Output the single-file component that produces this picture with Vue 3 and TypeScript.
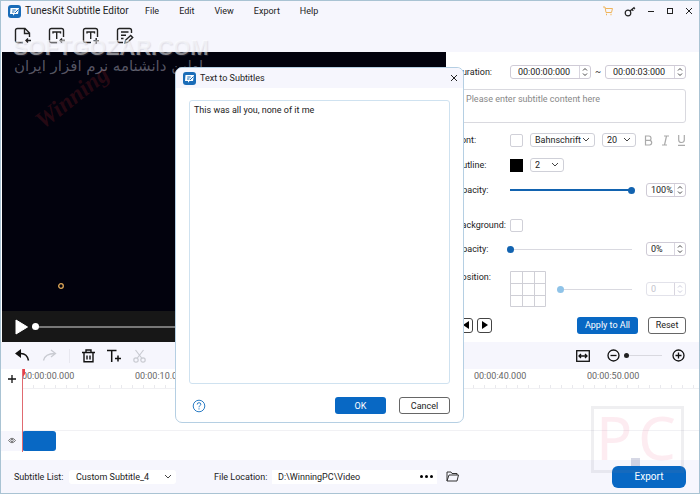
<script setup lang="ts">
import { ref } from 'vue'

const menus = ['File', 'Edit', 'View', 'Export', 'Help']
const marks = ['00:00:00.000', '00:00:10.000', '00:00:20.000', '00:00:30.000', '00:00:40.000', '00:00:50.000']
const startTime = ref('00:00:00:000')
const endTime = ref('00:00:03:000')
const dialogText = ref('This was all you, none of it me')
const textOpacity = ref(100)
const backOpacity = ref(0)
const position = ref(0)
const zoomLevel = ref(0)
const path = ref('D:\\WinningPC\\Video')
</script>

<template>
  <div class="app">
    <header class="titlebar">
      <svg class="logo" viewBox="0 0 13 13"><rect width="13" height="13" rx="3" fill="#1a6cb8" /><path d="M2.500 3h8.500l-1 6H6.500L5 10.800V9H2z" fill="#fff" /><path d="M4.300 5h3.500M4 7h2.500M7 8l3.500-3.500" stroke="#1a6cb8" fill="none" /></svg>
      <h1>TunesKit Subtitle Editor</h1>
      <nav>
        <button v-for="m in menus" :key="m" class="plain">{{ m }}</button>
      </nav>
      <div class="window-tools">
        <button class="plain" aria-label="Store"><svg width="10" height="10" viewBox="0 0 10 10" fill="none" stroke="#efb55c"><path d="M0 1h2l1 5.500h5.500L9.500 2.500H2.400" /><path d="M3 8.500h1M7.500 8.500h1" stroke-width="1.500" /></svg></button>
        <button class="plain" aria-label="Register"><svg width="12" height="11" viewBox="0 0 12 11" fill="none" stroke="#222" stroke-width="1.200"><circle cx="4" cy="7" r="2.800" /><path d="M6 5l4.500-3.700M8 3.300l1.300 1.500M9.700 1.900l1.300 1.300" /></svg></button>
        <button class="plain" aria-label="Minimize"><svg width="8" height="8" viewBox="0 0 8 8" stroke="#222"><path d="M1 4.500h6" /></svg></button>
        <button class="plain" aria-label="Maximize"><svg width="8" height="8" viewBox="0 0 8 8" fill="none" stroke="#222"><rect x="1.500" y="1.500" width="5" height="5" /></svg></button>
        <button class="plain" aria-label="Close"><svg width="8" height="8" viewBox="0 0 8 8" stroke="#222"><path d="M1 1l6 6M7 1L1 7" /></svg></button>
      </div>
    </header>

    <div class="toolbar">
      <button class="plain" aria-label="New file"><svg width="18" height="18" viewBox="0 0 18 18"><path d="M9 15.500H3.500Q1.500 15.500 1.500 13.500V3.500Q1.500 1.500 3.500 1.500H11L15.500 6v4M10.500 1.500V6.500h5M17 13.500h-5m2-2l-2 2 2 2" /></svg></button>
      <button class="plain" aria-label="Import subtitles"><svg width="18" height="18" viewBox="0 0 18 18"><path d="M9 15.500H3.500Q1.500 15.500 1.500 13.500V3.500Q1.500 1.500 3.500 1.500h10q2 0 2 2V10M5 6.500V5h7.500v1.500M8.700 5v7M17 13.500h-5m2-2l-2 2 2 2" /></svg></button>
      <button class="plain" aria-label="Add text"><svg width="18" height="18" viewBox="0 0 18 18"><path d="M9 15.500H3.500Q1.500 15.500 1.500 13.500V3.500Q1.500 1.500 3.500 1.500h10q2 0 2 2V10M5 6.500V5h7.500v1.500M8.700 5v7M11.500 13.800h5.500M14.200 11v5.500" /></svg></button>
      <button class="plain" aria-label="Text to subtitles"><svg width="18" height="18" viewBox="0 0 18 18"><path d="M7 15.500H3.500Q1.500 15.500 1.500 13.500V3.500Q1.500 1.500 3.500 1.500h10q2 0 2 2V6M5 5h7.500M5 8.300h5M5 11.500h2.500M9 16l.7-3 5-4.500 2 2-5 4.700z" /></svg></button>
    </div>

    <main>
      <section class="player">
        <div class="video">
          <svg class="spot" width="8" height="8" viewBox="0 0 8 8"><circle cx="4" cy="4" r="2.300" fill="none" stroke="#e0a958" stroke-width="1.300" /></svg>
        </div>
        <div class="transport">
          <button class="plain" aria-label="Play"><svg width="13" height="16" viewBox="0 0 13 16"><path d="M1 1l11.500 7L1 15z" fill="#fff" stroke="#fff" stroke-linejoin="round" /></svg></button>
          <input class="seek" type="range" value="0" aria-label="Seek" />
        </div>
      </section>

      <section class="panel">
        <div class="row">
          <label for="start">Duration:</label>
          <span class="spin time"><input id="start" v-model="startTime" /><svg viewBox="0 0 8 12"><path d="M2 4.500l2-2 2 2M2 7.500l2 2 2-2" /></svg></span>
          <span class="tilde">~</span>
          <span class="spin time"><input v-model="endTime" aria-label="End time" /><svg viewBox="0 0 8 12"><path d="M2 4.500l2-2 2 2M2 7.500l2 2 2-2" /></svg></span>
        </div>
        <textarea class="content" placeholder="Please enter subtitle content here" aria-label="Subtitle content"></textarea>
        <div class="row">
          <label for="font">Font:</label>
          <button class="swatch" aria-label="Font color"></button>
          <span class="pick font"><select id="font"><option>Bahnschrift</option></select><svg viewBox="0 0 8 6"><path d="M1 1l3 3 3-3" /></svg></span>
          <span class="pick size"><select aria-label="Font size"><option>20</option></select><svg viewBox="0 0 8 6"><path d="M1 1l3 3 3-3" /></svg></span>
          <span class="styles">
            <button class="plain" aria-label="Bold"><svg width="9" height="11" viewBox="0 0 9 11"><path d="M1.500 1H5q2 0 2 2.200T5 5.300H1.500zM1.500 5.300h4q2.200 0 2.200 2.300T5.500 10h-4z" /></svg></button>
            <button class="plain" aria-label="Italic"><svg width="9" height="11" viewBox="0 0 9 11"><path d="M3 1h5M1 10h5M5.500 1l-2 9" /></svg></button>
            <button class="plain" aria-label="Underline"><svg width="9" height="11" viewBox="0 0 9 11"><path d="M1.700 0v5q0 2.500 2.800 2.500T7.300 5V0M1 10.300h7" /></svg></button>
          </span>
        </div>
        <div class="row">
          <label for="outline">Outline:</label>
          <button class="swatch black" aria-label="Outline color"></button>
          <span class="pick size"><select id="outline"><option>2</option></select><svg viewBox="0 0 8 6"><path d="M1 1l3 3 3-3" /></svg></span>
        </div>
        <div class="row">
          <label for="op1">Opacity:</label>
          <input id="op1" v-model="textOpacity" class="slider full" type="range" />
          <span class="spin pct"><input :value="textOpacity + '%'" aria-label="Opacity value" /><svg viewBox="0 0 8 12"><path d="M2 4.500l2-2 2 2M2 7.500l2 2 2-2" /></svg></span>
        </div>
        <div class="row group">
          <label for="bg">Background:</label>
          <button id="bg" class="swatch"></button>
        </div>
        <div class="row">
          <label for="op2">Opacity:</label>
          <input id="op2" v-model="backOpacity" class="slider" type="range" />
          <span class="spin pct"><input :value="backOpacity + '%'" aria-label="Background opacity value" /><svg viewBox="0 0 8 12"><path d="M2 4.500l2-2 2 2M2 7.500l2 2 2-2" /></svg></span>
        </div>
        <div class="row position">
          <label for="pos">Position:</label>
          <svg class="grid9" width="36" height="36" viewBox="0 0 36 36"><path d="M.5.5h35v35H.5zM12.500.5v35M24.500.5v35M.5 12.500h35M.5 24.500h35" /></svg>
          <input id="pos" v-model="position" class="slider" type="range" disabled />
          <span class="spin pct off"><input :value="position" aria-label="Position value" disabled /><svg viewBox="0 0 8 12"><path d="M2 4.500l2-2 2 2M2 7.500l2 2 2-2" /></svg></span>
        </div>
        <div class="row actions">
          <button class="step" aria-label="Previous"><svg width="8" height="10" viewBox="0 0 8 10"><path d="M7 1v8L1 5z" /></svg></button>
          <button class="step" aria-label="Next"><svg width="8" height="10" viewBox="0 0 8 10"><path d="M1 1v8l6-4z" /></svg></button>
          <button class="btn primary apply">Apply to All</button>
          <button class="btn reset">Reset</button>
        </div>
      </section>
    </main>

    <div class="editbar">
      <button class="plain" aria-label="Undo"><svg width="15" height="13" viewBox="0 0 15 13"><path d="M6 0v9L0 4.500z" fill="#111" /><path d="M5 4.500q7-.5 8.500 7" stroke="#111" stroke-width="1.500" fill="none" /></svg></button>
      <button class="plain" aria-label="Redo"><svg width="15" height="13" viewBox="0 0 15 13" fill="none" stroke="#c9cbd2" stroke-width="1.300"><path d="M9 1l4.500 3.500L9 8M13 4.500Q3 4.500 1.500 11.500" /></svg></button>
      <i class="sep"></i>
      <button class="plain" aria-label="Delete"><svg width="13" height="14" viewBox="0 0 13 14" fill="none" stroke="#111" stroke-width="1.400"><path d="M0 3.500h13M4 3V1h5v2M2 4v8.800h9V4M5 6.500v4M8 6.500v4" /></svg></button>
      <button class="plain" aria-label="Add subtitle"><svg width="14" height="14" viewBox="0 0 14 14" fill="none" stroke="#111" stroke-width="1.500"><path d="M0 1.500h9.500M4.700 1.500V13M8 9.500h6M11 6.500v6" /></svg></button>
      <button class="plain" aria-label="Cut"><svg width="13" height="14" viewBox="0 0 13 14" fill="none" stroke="#c9cbd2" stroke-width="1.200"><path d="M2.500 1l6.500 8.500M10.500 1L4 9.500" /><circle cx="3" cy="11" r="2.200" /><circle cx="10" cy="11" r="2.200" /></svg></button>
      <div class="zoom">
        <button class="plain" aria-label="Fit"><svg width="14" height="12" viewBox="0 0 14 12" fill="none" stroke="#111" stroke-width="1.300"><rect x=".7" y=".7" width="12.600" height="10.600" /><path d="M3 6h8M5 4L3 6l2 2M9 4l2 2-2 2" /></svg></button>
        <button class="plain minus" aria-label="Zoom out"><svg width="13" height="13" viewBox="0 0 13 13" fill="none" stroke="#111" stroke-width="1.300"><circle cx="6.500" cy="6.500" r="5.500" /><path d="M3.500 6.500h6" /></svg></button>
        <input v-model="zoomLevel" class="slider dark" type="range" aria-label="Timeline zoom" />
        <button class="plain" aria-label="Zoom in"><svg width="13" height="13" viewBox="0 0 13 13" fill="none" stroke="#111" stroke-width="1.300"><circle cx="6.500" cy="6.500" r="5.500" /><path d="M3.500 6.500h6M6.500 3.500v6" /></svg></button>
      </div>
    </div>

    <section class="timeline">
      <div class="heads">
        <button class="plain add" aria-label="Add track"><svg width="8" height="8" viewBox="0 0 8 8"><path d="M0 4h8M4 0v8" stroke="#111" stroke-width="1.300" /></svg></button>
        <button class="plain eye" aria-label="Toggle visibility"><svg width="8" height="7" viewBox="0 0 8 7" fill="none" stroke="#555" stroke-width=".8"><path d="M.5 3.500q3.500-4.500 7 0q-3.500 4.500-7 0z" /><circle cx="4" cy="3.500" r="1.200" /></svg></button>
      </div>
      <div class="lanes">
        <div class="ruler"><span v-for="m in marks" :key="m">{{ m }}</span></div>
        <div class="lane"><div class="clip"></div></div>
        <svg class="playhead" width="4" height="83" viewBox="0 0 4 83"><path d="M0 0h3v5L1 8H0z" fill="#e8404a" /><path d="M.5 0v83" stroke="#e06a70" /></svg>
      </div>
    </section>

    <footer>
      <label for="list">Subtitle List:</label>
      <span class="pick flat"><select id="list"><option>Custom Subtitle_4</option></select><svg viewBox="0 0 8 6"><path d="M1 1l3 3 3-3" /></svg></span>
      <label class="loc" for="path">File Location:</label>
      <span class="path"><input id="path" v-model="path" /><button class="plain" aria-label="Browse"><svg width="13" height="3" viewBox="0 0 13 3"><circle cx="1.500" cy="1.500" r="1.500" /><circle cx="6.500" cy="1.500" r="1.500" /><circle cx="11.500" cy="1.500" r="1.500" /></svg></button></span>
      <button class="plain" aria-label="Open folder"><svg width="13" height="11" viewBox="0 0 13 11" fill="none" stroke="#333"><path d="M1 10V1h4l1 1.500h5V4M1 10l2-6h9.500l-1.500 6z" /></svg></button>
      <button class="btn primary export">Export</button>
    </footer>

    <div class="mark-script">Winning</div>
    <div class="mark-site">SOFTGOZAR.COM</div>
    <div class="mark-fa" dir="rtl" lang="fa">اولین دانشنامه نرم افزار ایران</div>
    <div class="mark-pc"><span>P</span><i></i><span>C</span></div>

    <section class="dialog" role="dialog" aria-labelledby="dlg-title">
      <header>
        <svg class="logo" viewBox="0 0 13 13"><rect width="13" height="13" rx="3" fill="#1a6cb8" /><path d="M2.500 3h8.500l-1 6H6.500L5 10.800V9H2z" fill="#fff" /><path d="M4.300 5h3.500M4 7h2.500M7 8l3.500-3.500" stroke="#1a6cb8" fill="none" /></svg>
        <h2 id="dlg-title">Text to Subtitles</h2>
        <button class="plain" aria-label="Close dialog"><svg width="8" height="8" viewBox="0 0 8 8" stroke="#222"><path d="M1 1l6 6M7 1L1 7" /></svg></button>
      </header>
      <textarea v-model="dialogText" aria-label="Text"></textarea>
      <div class="dialog-actions">
        <button class="plain help" aria-label="Help"><svg width="14" height="14" viewBox="0 0 14 14" fill="none" stroke="#2b7cc4"><circle cx="7" cy="7" r="5.800" /><path d="M5.200 5.500q0-1.800 1.800-1.800t1.800 1.600q0 1-1 1.500T7 8.300M7 9.300v1.200" /></svg></button>
        <button class="btn primary">OK</button>
        <button class="btn">Cancel</button>
      </div>
    </section>
  </div>
</template>

<style>
body {
  margin: 0;
}
</style>

<style scoped>
* {
  box-sizing: border-box;
}
.app {
  position: relative;
  display: flex;
  flex-direction: column;
  min-height: 100vh;
  overflow: hidden;
  border: 1px solid #a9c3d3;
  background: #fff;
  color: #222;
  font: 9px/12px Roboto, "Noto Sans", sans-serif;
}
button, input, select, textarea {
  margin: 0;
  padding: 0;
  color: inherit;
  font: inherit;
}
input, textarea, select {
  min-width: 0;
  outline: 0;
}
svg {
  display: block;
  flex: none;
}
.plain {
  display: flex;
  border: 0;
  background: none;
}
.logo {
  width: 13px;
  height: 13px;
}
.titlebar {
  display: flex;
  align-items: center;
  height: 20px;
  padding: 0 6px 0 7px;
  background: #f6f6fd;
}
h1, h2 {
  margin: 0;
  font-weight: 400;
  white-space: nowrap;
}
h1 {
  width: 115px;
  margin-left: 4px;
  font-size: 10px;
}
nav {
  display: flex;
  gap: 10px;
}
nav .plain {
  padding: 0 5px;
}
.window-tools {
  display: flex;
  flex: 1;
  align-items: center;
  justify-content: flex-end;
  gap: 11px;
}
.toolbar {
  display: flex;
  gap: 16px;
  height: 31px;
  padding: 6px 13px;
  background: #f6f6fd;
}
.toolbar svg {
  fill: none;
  stroke: #222;
  stroke-width: 1.400;
}
main {
  display: flex;
  flex: 1;
}
.player {
  display: flex;
  flex: 1;
  flex-direction: column;
  margin-left: 1px;
}
.video {
  flex: 1;
  padding: 230px 0 0 55px;
  background: #02020d;
}
.transport {
  display: flex;
  align-items: center;
  gap: 4px;
  height: 31px;
  padding-left: 13px;
  background: #171717;
}
.seek {
  flex: 1;
  height: 8px;
  appearance: none;
  background: linear-gradient(#777, #777) center / 100% 2px no-repeat;
}
.seek::-webkit-slider-thumb {
  width: 7px;
  height: 7px;
  appearance: none;
  border-radius: 50%;
  background: #fff;
}
.panel {
  width: 253px;
  padding: 10px 13px 6px 10px;
}
.row {
  display: flex;
  align-items: center;
  height: 20px;
  margin-bottom: 5px;
}
.row label {
  width: 54px;
  white-space: nowrap;
}
.spin {
  display: flex;
  height: 14px;
  border: 1px solid #cfcbd6;
  border-radius: 3px;
}
.spin input {
  flex: 1;
  border: 0;
  background: none;
}
.spin svg {
  width: 11px;
  height: 12px;
  border-left: 1px solid #d8d5df;
}
.spin path, .pick path {
  fill: none;
  stroke: #444;
}
.time {
  width: 81px;
}
.time input {
  padding-left: 7px;
}
.tilde {
  width: 14px;
  text-align: center;
}
.pct {
  width: 40px;
  margin-left: 14px;
}
.pct input {
  padding-left: 4px;
}
.off {
  border-color: #e2e2ea;
  color: #c4c4cc;
}
.off path {
  stroke: #ccd;
}
.content {
  display: block;
  width: 100%;
  height: 34px;
  margin: 7px 0;
  padding: 3px 9px;
  border: 1px solid #d9d9df;
  border-radius: 3px;
  resize: none;
}
.content::placeholder {
  color: #888;
}
.swatch {
  width: 13px;
  height: 13px;
  border: 1px solid #d0d0d8;
  border-radius: 2px;
  background: #fff;
}
.black {
  border-color: #000;
  border-radius: 0;
  background: #000;
}
.pick {
  display: grid;
  align-items: center;
  height: 14px;
  margin-left: 7px;
  border: 1px solid #cfd0d8;
  border-radius: 3px;
  background: #fff;
}
.pick select {
  grid-area: 1 / 1;
  width: 100%;
  padding-left: 4px;
  appearance: none;
  border: 0;
  background: none;
}
.pick svg {
  grid-area: 1 / 1;
  justify-self: end;
  width: 8px;
  height: 6px;
  margin-right: 4px;
  pointer-events: none;
}
.font {
  width: 65px;
}
.size {
  width: 34px;
}
.styles {
  display: flex;
  flex: 1;
  justify-content: space-between;
  margin-left: 8px;
}
.styles path {
  fill: none;
  stroke: #aaa;
  stroke-width: 1.200;
}
.slider {
  flex: 1;
  height: 8px;
  margin: 0 -3px;
  appearance: none;
  background: linear-gradient(#d9d9e0, #d9d9e0) center / calc(100% - 6px) 1px no-repeat;
}
.full {
  background: linear-gradient(#1263b0, #1263b0) center / calc(100% - 6px) 2px no-repeat;
}
.slider::-webkit-slider-thumb {
  width: 7px;
  height: 7px;
  appearance: none;
  border-radius: 50%;
  background: #1263b0;
}
.slider:disabled::-webkit-slider-thumb {
  background: #8fc3e8;
}
.group {
  margin: 15px 0 4px;
}
.position {
  align-items: flex-start;
  height: 36px;
  margin-top: 12px;
}
.position .slider {
  margin: 14px -3px 0 11px;
}
.position .spin {
  margin-top: 11px;
}
.grid9 path {
  fill: none;
  stroke: #cfcfd6;
}
.actions {
  margin: 8px 0 0;
}
.step {
  display: grid;
  place-items: center;
  width: 15px;
  height: 15px;
  margin-left: 4px;
  border: 1px solid #444;
  border-radius: 3px;
  background: #fff;
}
.step:first-child {
  margin-left: 2px;
}
.btn {
  width: 51px;
  height: 17px;
  border: 1px solid #666;
  border-radius: 3px;
  background: #fff;
  white-space: nowrap;
}
.primary {
  border: 0;
  background: #0868c4;
  color: #fff;
}
.apply {
  width: 61px;
  margin: 0 10px 0 auto;
}
.reset {
  width: 38px;
}
.editbar {
  display: flex;
  align-items: center;
  gap: 12px;
  height: 27px;
  padding: 0 14px;
  background: #f6f6fd;
}
.sep {
  width: 1px;
  height: 14px;
  background: #e8e8f0;
}
.zoom {
  display: flex;
  align-items: center;
  margin-left: auto;
}
.minus {
  margin: 0 4px 0 17px;
}
.dark {
  flex: none;
  width: 41px;
  margin: 0 7px 0 0;
}
.dark::-webkit-slider-thumb {
  width: 5px;
  height: 5px;
  background: #222;
}
.timeline {
  display: flex;
  height: 91px;
}
.heads {
  display: flex;
  flex-direction: column;
  width: 21px;
}
.add {
  padding: 6px 7px;
}
.eye {
  height: 20px;
  margin-top: 42px;
  padding: 6px 7px;
  background: #f6f6fd;
}
.lanes {
  position: relative;
  flex: 1;
  min-width: 0;
  overflow: hidden;
}
.ruler {
  display: flex;
  height: 20px;
  border-bottom: 1px solid #f0f0f3;
  background: repeating-linear-gradient(90deg, #e9e9ed 0 1px, transparent 1px 11px) bottom / 100% 3px no-repeat;
  color: #666;
}
.ruler span {
  flex: 0 0 113px;
  padding-top: 1px;
}
.lane {
  height: 63px;
  padding-top: 42px;
  background: linear-gradient(#f1f1f4, #f1f1f4) 0 41px / 100% 1px no-repeat;
}
.clip {
  width: 34px;
  height: 20px;
  border-radius: 3px;
  background: #0868c4;
}
.playhead {
  position: absolute;
  top: 0;
  left: 0;
}
footer {
  display: flex;
  align-items: center;
  height: 33px;
  padding: 0 13px;
  background: #f6f6fd;
}
footer label {
  width: 50px;
  white-space: nowrap;
}
.flat {
  width: 107px;
  margin-left: 5px;
  border: 0;
}
.flat select {
  padding-left: 7px;
}
footer .loc {
  width: 56px;
  margin-left: 38px;
}
.path {
  display: flex;
  align-items: center;
  width: 165px;
  height: 14px;
  margin: 0 9px 0 2px;
  padding: 0 4px 0 6px;
  background: #fff;
}
.path input {
  flex: 1;
  border: 0;
}
.export {
  width: 74px;
  height: 22px;
  margin-left: auto;
  border-radius: 6px;
  font-size: 10px;
}
.dialog {
  position: absolute;
  top: 66px;
  left: 174px;
  width: 289px;
  overflow: hidden;
  border: 1px solid #b5cfe3;
  border-radius: 7px;
  background: #fff;
}
.dialog header {
  display: flex;
  align-items: center;
  height: 20px;
  padding: 0 5px 0 7px;
  background: #f6f6fd;
}
.dialog h2 {
  flex: 1;
  margin-left: 4px;
  font-size: 9px;
}
.dialog textarea {
  display: block;
  width: calc(100% - 26px);
  height: 284px;
  margin: 12px 13px 13px;
  padding: 3px 4px;
  border: 1px solid #cfe2f0;
  border-radius: 3px;
  resize: none;
}
.dialog-actions {
  display: flex;
  align-items: center;
  gap: 13px;
  padding: 0 13px 8px 16px;
}
.help {
  margin-right: auto;
}
.mark-script {
  position: absolute;
  top: 82px;
  left: 28px;
  color: rgba(190, 40, 50, 0.2);
  font: italic bold 24px/28px "Liberation Serif", serif;
  transform: rotate(-38deg);
}
.mark-site {
  position: absolute;
  top: 36px;
  left: 12px;
  color: rgba(255, 255, 255, 0.5);
  font: bold 22px/22px "Liberation Sans", sans-serif;
  text-shadow: 1px 1px 1px rgba(130, 130, 150, 0.2);
}
.mark-fa {
  position: absolute;
  top: 55px;
  left: 13px;
  color: rgba(190, 190, 205, 0.45);
  font: 15px/20px "DejaVu Sans", sans-serif;
  white-space: nowrap;
}
.mark-pc {
  position: absolute;
  right: 15px;
  bottom: 20px;
  display: flex;
  align-items: flex-start;
  justify-content: space-between;
  width: 93px;
  height: 67px;
  padding: 6px 5px 0 2px;
  border: 3px solid rgba(120, 120, 140, 0.12);
  color: rgba(240, 100, 140, 0.12);
  font: 60px/44px "Noto Sans", sans-serif;
  pointer-events: none;
}
.mark-pc i {
  align-self: flex-end;
  width: 9px;
  height: 8px;
  margin: 0 -4px 4px;
  background: rgba(90, 100, 150, 0.25);
}
</style>
